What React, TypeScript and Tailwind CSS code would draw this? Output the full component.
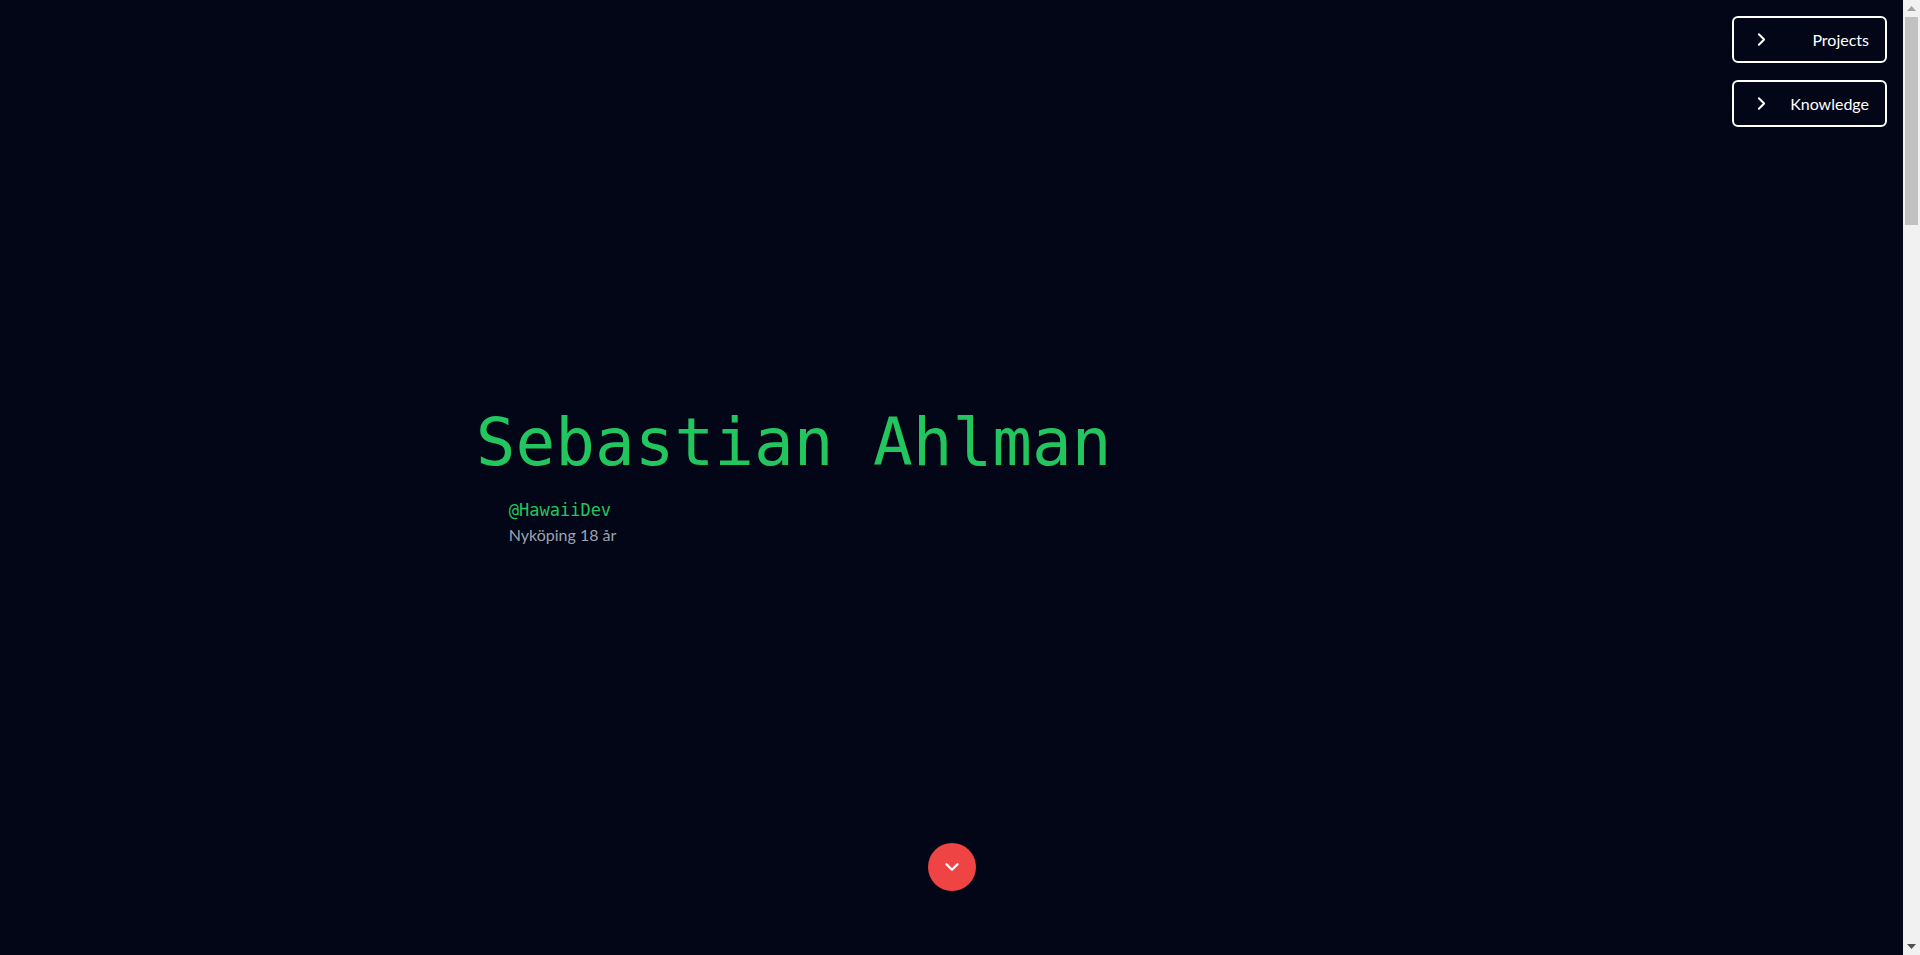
import React from "react";
import { ChevronRight, ChevronDown } from "lucide-react";

function NavButton({ label }: { label: string }) {
  return (
    <button className="flex h-[47px] w-[155px] items-center justify-between rounded-md border-2 border-white bg-[#020617] pl-[17px] pr-4 text-[16px] text-white [font-family:Lato,'Open_Sans',sans-serif]">
      <ChevronRight size={21} strokeWidth={2.3} />
      <span>{label}</span>
    </button>
  );
}

function FakeScrollbar() {
  return (
    <div className="flex h-screen w-[17px] shrink-0 flex-col bg-[#f1f1f1]">
      <div className="flex h-[17px] items-center justify-center">
        <svg width="9" height="5" viewBox="0 0 9 5">
          <polygon points="0,5 4.5,0 9,5" fill="#a3a3a3" />
        </svg>
      </div>
      <div className="flex h-[208px] justify-center px-[2px]">
        <div className="w-full bg-[#c1c1c1]" />
      </div>
      <div className="flex-1" />
      <div className="flex h-[17px] items-center justify-center">
        <svg width="9" height="5" viewBox="0 0 9 5">
          <polygon points="0,0 9,0 4.5,5" fill="#505050" />
        </svg>
      </div>
    </div>
  );
}

export default function App() {
  return (
    <div className="flex h-screen w-full overflow-hidden bg-[#020617]">
      <main className="relative flex h-screen flex-1 items-center">
        <div className="absolute right-4 top-4 flex flex-col gap-[17px]">
          <NavButton label="Projects" />
          <NavButton label="Knowledge" />
        </div>
        <div className="ml-[25%] flex flex-col">
          <h1 className="text-[66px] leading-none text-[#22c55e] [font-family:'DejaVu_Sans_Mono',monospace]">
            Sebastian Ahlman
          </h1>
          <div className="mt-[22px] pl-[33px]">
            <p className="text-[17px] leading-6 text-[#22c55e] [font-family:'DejaVu_Sans_Mono',monospace]">
              @HawaiiDev
            </p>
            <p className="mt-[3px] text-[16px] leading-5 text-[#9ca3af] [font-family:Lato,'Open_Sans',sans-serif]">
              Nyköping 18 år
            </p>
          </div>
        </div>
        <button className="absolute bottom-16 left-1/2 flex h-12 w-12 -translate-x-1/2 items-center justify-center rounded-full bg-[#ef4444] text-white">
          <ChevronDown size={22} strokeWidth={2.5} />
        </button>
      </main>
      <FakeScrollbar />
    </div>
  );
}
